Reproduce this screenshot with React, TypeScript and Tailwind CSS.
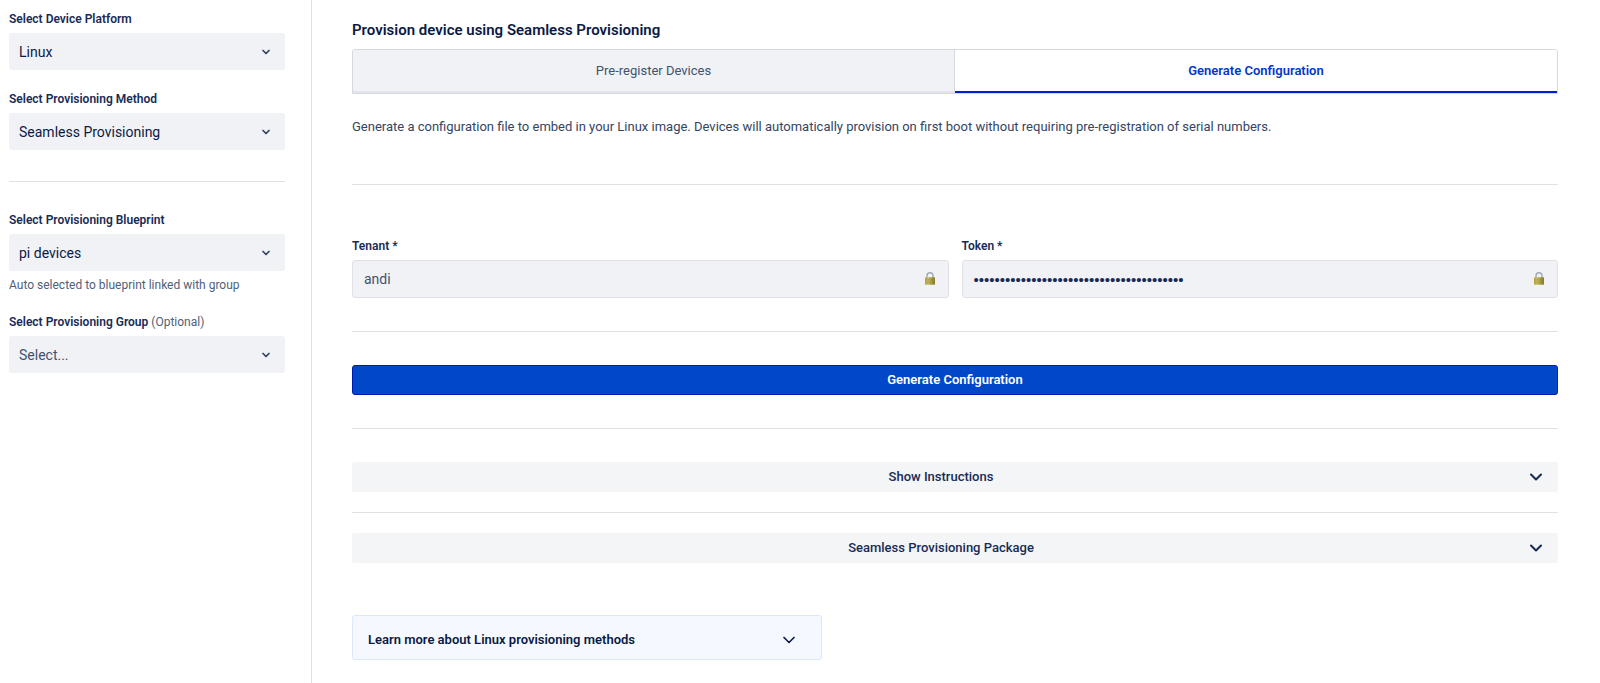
import React, { useId, useState } from 'react';
import { ChevronDown } from 'lucide-react';
import clsx from 'clsx';

interface SelectFieldProps {
  label: string;
  options: string[];
  optional?: boolean;
  placeholder?: string;
  hint?: string;
}

const SelectField = ({ label, options, optional, placeholder, hint }: SelectFieldProps) => {
  const id = useId();
  const [value, setValue] = useState(placeholder ? '' : options[0]);

  return (
    <div>
      <label htmlFor={id} className="block text-xs font-semibold text-[#172b55]">
        {label}
        {optional && <span className="font-normal text-[#505f79]"> (Optional)</span>}
      </label>
      <div className="relative mt-1.5">
        <select
          id={id}
          value={value}
          onChange={e => setValue(e.target.value)}
          className={clsx(
            'block h-[37px] w-full appearance-none rounded-[3px] bg-[#f1f2f6] pr-8 pl-2.5 text-sm',
            value ? 'text-[#0b1a44]' : 'text-[#42526e]'
          )}
        >
          {placeholder && <option value="">{placeholder}</option>}
          {options.map(option => (
            <option key={option} value={option}>{option}</option>
          ))}
        </select>
        <ChevronDown
          className="pointer-events-none absolute top-[13px] right-[13px] size-3 text-[#344563]"
          strokeWidth={3.5}
        />
      </div>
      {hint && <p className="mt-1.5 text-xs text-[#505f79]">{hint}</p>}
    </div>
  );
};

const LockIcon = () => (
  <svg
    viewBox="0 0 10 13"
    className="pointer-events-none absolute top-3 right-3.5 h-[13px] w-2.5"
    aria-hidden="true"
  >
    <defs>
      <linearGradient id="lock-body" x1="0" y1="0" x2="1" y2="0">
        <stop offset="0" stopColor="#b5a53c" />
        <stop offset="0.3" stopColor="#c9bd62" />
        <stop offset="1" stopColor="#857a2c" />
      </linearGradient>
    </defs>
    <path d="M2 6V3.8a3 3 0 0 1 6 0V6" fill="none" stroke="#9fa9b3" strokeWidth="1.4" />
    <rect x="0" y="5.2" width="10" height="7.6" rx="0.8" fill="url(#lock-body)" />
    <path d="M0.4 7.4h9.2M0.4 9.2h9.2M0.4 11h9.2" stroke="#8a7d2b" strokeWidth="0.4" opacity="0.6" />
  </svg>
);

interface LockedFieldProps {
  label: string;
  value: string;
  secret?: boolean;
}

const LockedField = ({ label, value, secret }: LockedFieldProps) => {
  const id = useId();
  return (
    <div>
      <label htmlFor={id} className="block text-xs font-semibold text-[#172b55]">
        {label} *
      </label>
      <div className="relative mt-1.5">
        <input
          id={id}
          type={secret ? 'password' : 'text'}
          value={value}
          readOnly
          className={clsx(
            'block h-[38px] w-full rounded-[3px] border border-[#dfe1e6] bg-[#f1f2f6] pr-9 pl-[11px]',
            secret
              ? "font-['Liberation_Sans',sans-serif] text-[15px] text-[#172b55]"
              : 'text-sm text-[#42526e]'
          )}
        />
        <LockIcon />
      </div>
    </div>
  );
};

const Accordion = ({ title }: { title: string }) => {
  const [open, setOpen] = useState(false);
  return (
    <button
      type="button"
      aria-expanded={open}
      onClick={() => setOpen(!open)}
      className="relative flex h-[30px] w-full items-center justify-center rounded-[3px] bg-[#f4f5f7] pr-7 text-[13px] font-medium text-[#172b55]"
    >
      {title}
      <ChevronDown
        className={clsx('absolute top-[5px] right-3 size-5', open && 'rotate-180')}
        strokeWidth={2.5}
      />
    </button>
  );
};

const tabs = ['Pre-register Devices', 'Generate Configuration'];

const App = () => {
  const [activeTab, setActiveTab] = useState('Generate Configuration');
  const [learnOpen, setLearnOpen] = useState(false);

  return (
    <div className="flex min-h-screen bg-white font-[Roboto,sans-serif] text-[#172b55]">
      <aside className="w-[312px] shrink-0 border-r border-[#dfe1e6] pt-[11px] pr-[26px] pl-[9px]">
        <div className="flex flex-col gap-[21px]">
          <SelectField label="Select Device Platform" options={['Linux']} />
          <SelectField label="Select Provisioning Method" options={['Seamless Provisioning']} />
        </div>
        <hr className="mt-[31px] mb-[30px] border-[#dfe1e6]" />
        <div className="flex flex-col gap-[21px]">
          <SelectField
            label="Select Provisioning Blueprint"
            options={['pi devices']}
            hint="Auto selected to blueprint linked with group"
          />
          <SelectField
            label="Select Provisioning Group"
            options={[]}
            optional
            placeholder="Select..."
          />
        </div>
      </aside>

      <main className="min-w-0 flex-1 pt-[18px] pr-[42px] pb-6 pl-10">
        <h1 className="text-[15px] leading-6 font-semibold text-[#0b1a44]">
          Provision device using Seamless Provisioning
        </h1>

        <div
          role="tablist"
          className="mt-[7px] grid h-[45px] grid-cols-2 overflow-hidden rounded-t-[3px] border border-[#d5d8de]"
        >
          {tabs.map(tab => (
            <button
              key={tab}
              type="button"
              role="tab"
              aria-selected={tab === activeTab}
              onClick={() => setActiveTab(tab)}
              className={clsx(
                'border-b-2 text-[13px] not-last:border-r not-last:border-r-[#d5d8de]',
                tab === activeTab
                  ? 'border-b-[#0020d0] bg-white font-semibold text-[#0038c8]'
                  : 'border-b-[#e3e5ea] bg-[#f1f2f6] text-[#42526e]'
              )}
            >
              {tab}
            </button>
          ))}
        </div>

        <p className="mt-[23px] text-[13px] leading-5 text-[#344563]">
          Generate a configuration file to embed in your Linux image. Devices will automatically
          provision on first boot without requiring pre-registration of serial numbers.
        </p>

        <hr className="mt-[47px] mb-[53px] border-[#dfe1e6]" />

        <div className="grid grid-cols-2 gap-[13px]">
          <LockedField label="Tenant" value="andi" />
          <LockedField label="Token" value={'x'.repeat(40)} secret />
        </div>

        <hr className="my-[33px] border-[#dfe1e6]" />

        <button
          type="button"
          className="block h-[30px] w-full rounded-[3px] border border-[#0018b4] bg-[#0048c8] text-[13px] font-semibold text-white"
        >
          Generate Configuration
        </button>

        <hr className="my-[33px] border-[#dfe1e6]" />

        <Accordion title="Show Instructions" />
        <hr className="my-5 border-[#dfe1e6]" />
        <Accordion title="Seamless Provisioning Package" />

        {/* Learn more card */}
        <button
          type="button"
          aria-expanded={learnOpen}
          onClick={() => setLearnOpen(!learnOpen)}
          className="mt-[52px] flex h-[45px] w-full max-w-[470px] items-center justify-between rounded-[3px] border border-[#dbe7ff] bg-[#f5f9ff] pt-1 pr-[22px] pl-[15px] text-[13px] font-semibold text-[#0b1a44]"
        >
          Learn more about Linux provisioning methods
          <ChevronDown className={clsx('size-5', learnOpen && 'rotate-180')} strokeWidth={2} />
        </button>
      </main>
    </div>
  );
};

export default App;
